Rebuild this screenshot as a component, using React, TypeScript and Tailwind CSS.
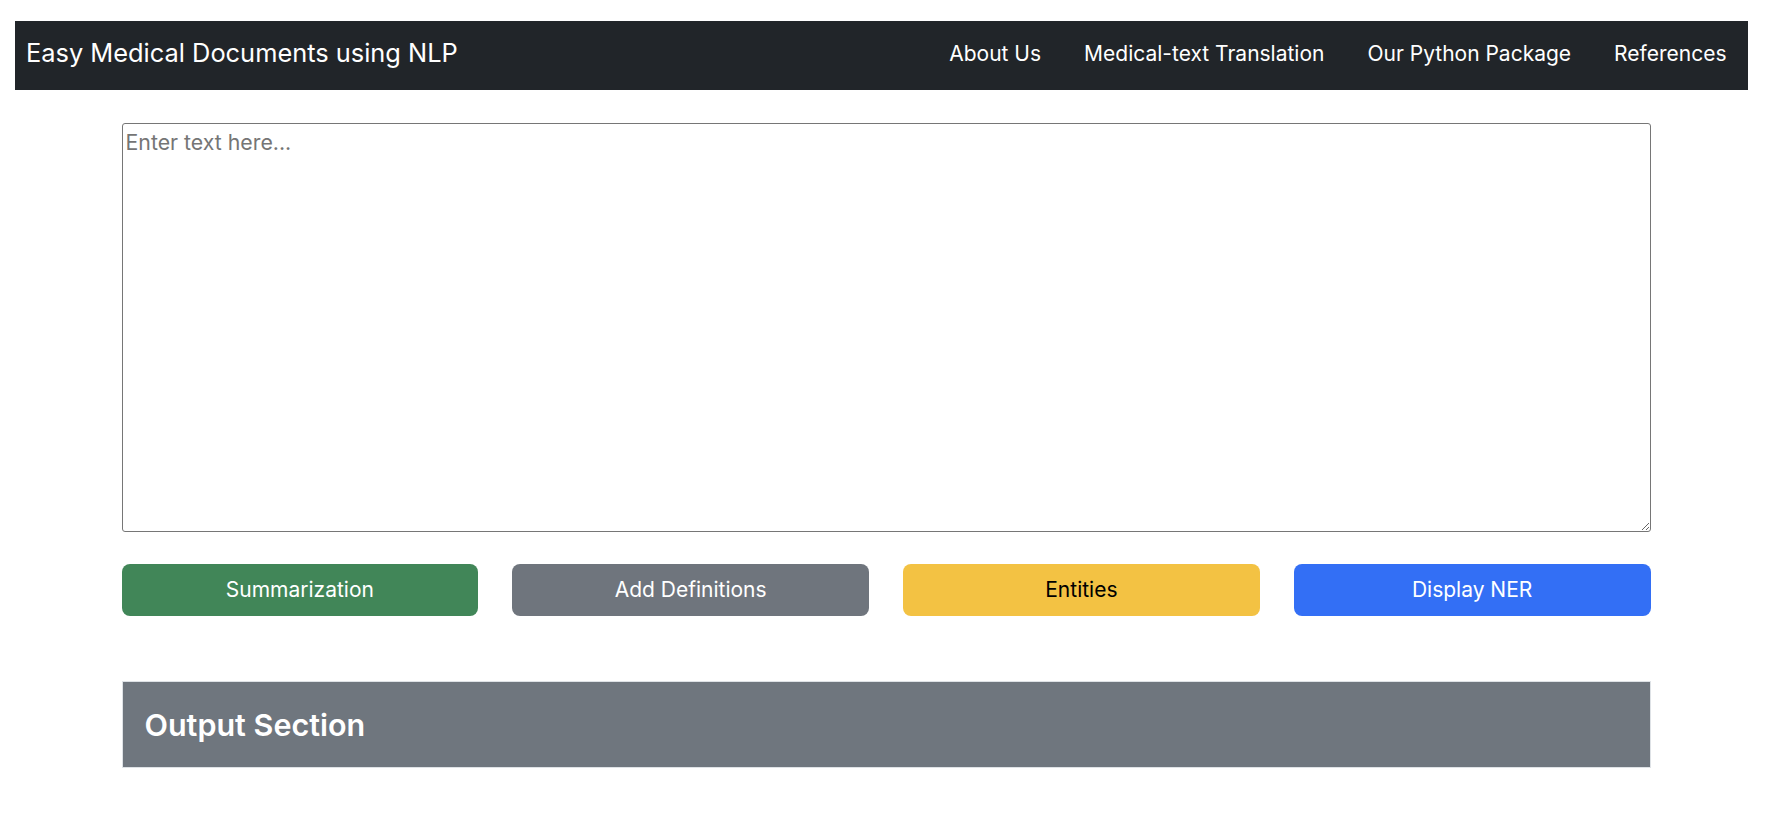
const links = ["About Us", "Medical-text Translation", "Our Python Package", "References"]

const buttons = [
	{ label: "Summarization", cls: "bg-[#418658] text-white" },
	{ label: "Add Definitions", cls: "bg-[#6f757d] text-white" },
	{ label: "Entities", cls: "bg-[#f3c243] text-black" },
	{ label: "Display NER", cls: "bg-[#336ff5] text-white" },
]

export default function App() {
	return (
		<div className="min-h-screen bg-white pt-[21px] font-['Inter',sans-serif]">
			<nav className="ml-[15px] mr-[24px] flex h-[69px] items-center justify-between bg-[#212529] pb-[4px] pl-[11px]">
				<a href="#" className="text-[25.4px] text-white">
					Easy Medical Documents using NLP
				</a>
				<ul className="flex items-center">
					{links.map((l) => (
						<li key={l}>
							<a href="#" className="block px-[21.5px] text-[21px] text-white">
								{l}
							</a>
						</li>
					))}
				</ul>
			</nav>

			<main className="mx-auto w-[1529px] pt-[33px]">
				<textarea
					placeholder="Enter text here..."
					className="block h-[409px] w-full rounded-[3px] border border-[#767676] px-[3px] py-[3px] text-[21.3px] text-black placeholder:text-[#757575] focus:outline-none"
				/>

				<div className="mt-[32px] grid grid-cols-4 gap-[34px]">
					{buttons.map((b) => (
						<button
							key={b.label}
							type="button"
							className={`h-[52px] rounded-[8px] text-[21px] ${b.cls}`}
						>
							{b.label}
						</button>
					))}
				</div>

				<section className="mt-[65px] flex h-[87px] items-center border border-[#dee2e6] bg-[#6f767e] px-[22px]">
					<h2 className="text-[30.5px] font-semibold text-white">Output Section</h2>
				</section>
			</main>
		</div>
	)
}
